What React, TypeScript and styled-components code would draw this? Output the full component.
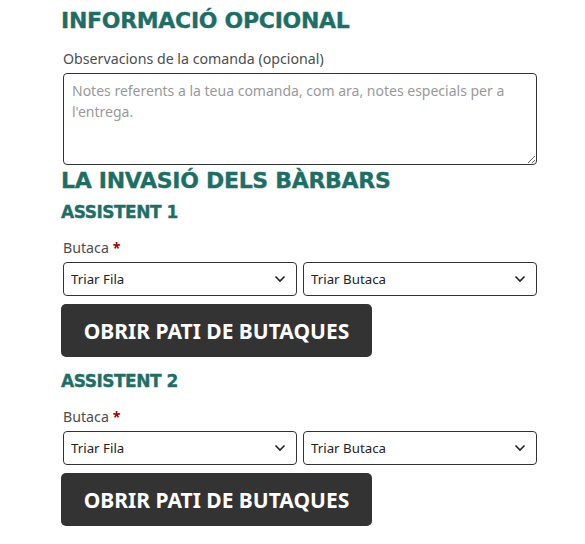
import React from "react";
import styled, { createGlobalStyle } from "styled-components";

const Global = createGlobalStyle`
  html, body { margin: 0; padding: 0; background: #fff; }
  body { font-family: "Noto Sans", "Open Sans", sans-serif; }
`;

const Page = styled.div`
  padding: 7px 48px 0 61px;
  width: 476px;
`;

const Heading = styled.h2<{ $small?: boolean }>`
  margin: 0;
  font-family: "DejaVu Sans", "Liberation Sans", sans-serif;
  font-weight: 900;
  font-size: ${(p) => (p.$small ? 17 : 22)}px;
  line-height: ${(p) => (p.$small ? 22 : 28)}px;
  color: #1d6f66;
  letter-spacing: ${(p) => (p.$small ? -0.5 : -0.3)}px;
  -webkit-text-stroke: 0.35px #1d6f66;
`;

const Field = styled.div<{ $top: number }>`
  display: flex;
  flex-direction: column;
  padding-left: 2px;
  margin-top: ${(p) => p.$top}px;
`;

const Label = styled.label`
  font-size: 14.2px;
  line-height: 20px;
  color: #4d4d4d;
`;

const Required = styled.span`
  color: #a30000;
  font-weight: 700;
  margin-left: 4px;
`;

const TextArea = styled.textarea`
  box-sizing: border-box;
  width: 474px;
  height: 92px;
  margin-top: 4px;
  border: 1px solid #333;
  border-radius: 4px;
  padding: 6px 8px;
  font-family: "Noto Sans", sans-serif;
  font-size: 14px;
  line-height: 21px;
  color: #333;
  resize: vertical;
  &::placeholder { color: #999; }
`;

const SelectRow = styled.div`
  display: grid;
  grid-template-columns: 1fr 1fr;
  gap: 6px;
  width: 474px;
  margin-top: 4px;
`;

const SelectBox = styled.div`
  box-sizing: border-box;
  height: 34px;
  border: 1px solid #333;
  border-radius: 4px;
  display: flex;
  align-items: center;
  justify-content: space-between;
  padding: 0 10px 0 7px;
  font-size: 13.3px;
  color: #222;
`;

const Button = styled.button`
  box-sizing: border-box;
  margin-top: 8px;
  width: 311px;
  height: 53px;
  padding: 0;
  background: #333;
  border: none;
  border-radius: 5px;
  color: #fff;
  font-family: "Noto Sans", sans-serif;
  font-weight: 700;
  font-size: 21px;
  text-align: center;
  align-self: flex-start;
`;

const Section = styled.div<{ $top: number }>`
  margin-top: ${(p) => p.$top}px;
  display: flex;
  flex-direction: column;
`;

const Chevron = () => (
  <svg width="12" height="8" viewBox="0 0 12 8" fill="none">
    <path d="M1.5 1.5 L6 6 L10.5 1.5" stroke="#222" strokeWidth="1.6" />
  </svg>
);

const Select = ({ text }: { text: string }) => (
  <SelectBox>
    <span>{text}</span>
    <Chevron />
  </SelectBox>
);

const Attendee = ({ n }: { n: number }) => (
  <Section $top={n === 1 ? 6 : 13}>
    <Heading $small>ASSISTENT {n}</Heading>
    <Field $top={15}>
      <Label>
        Butaca<Required>*</Required>
      </Label>
      <SelectRow>
        <Select text="Triar Fila" />
        <Select text="Triar Butaca" />
      </SelectRow>
    </Field>
    <Button>OBRIR PATI DE BUTAQUES</Button>
  </Section>
);

export default function App() {
  return (
    <Page>
      <Global />
      <Heading>INFORMACIÓ OPCIONAL</Heading>
      <Field $top={14}>
        <Label>Observacions de la comanda (opcional)</Label>
        <TextArea placeholder="Notes referents a la teua comanda, com ara, notes especials per a l'entrega." />
      </Field>
      <Heading style={{ marginTop: 2 }}>LA INVASIÓ DELS BÀRBARS</Heading>
      <Attendee n={1} />
      <Attendee n={2} />
    </Page>
  );
}
